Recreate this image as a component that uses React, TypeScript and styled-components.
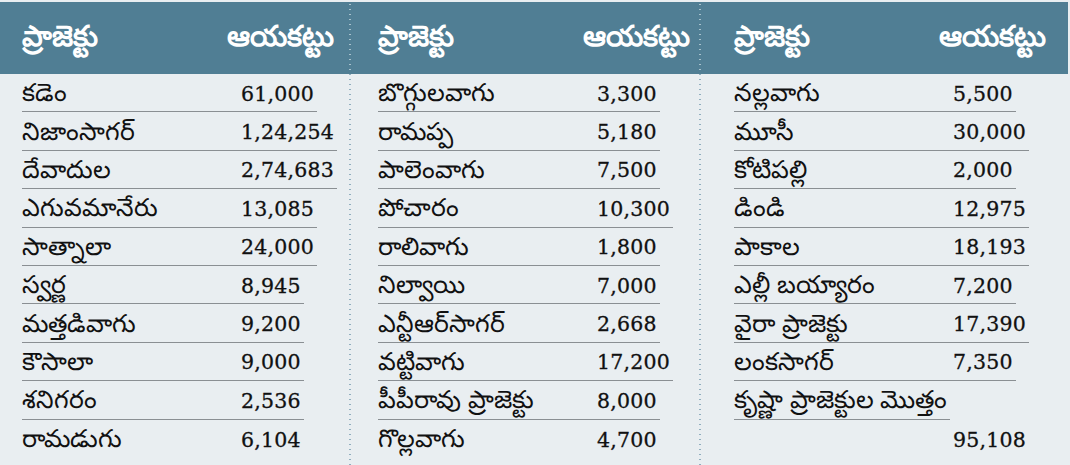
import React from "react";
import styled, { createGlobalStyle } from "styled-components";

const GlobalStyle = createGlobalStyle`
  html, body {
    margin: 0;
    padding: 0;
    background: #eef2f4;
  }
`;

const Page = styled("div")`
  width: 1070px;
  height: 465px;
  padding: 2px 2px 0 0;
  box-sizing: border-box;
  display: flex;
  background: #e9eef1;
  overflow: hidden;
`;

const Panel = styled("div")<{ $width: number }>`
  width: ${(p) => p.$width}px;
  display: flex;
  flex-direction: column;
  flex-shrink: 0;
`;

const Divider = styled("div")`
  width: 2px;
  flex-shrink: 0;
  background-color: #e9eef1;
  background-image: radial-gradient(circle, #8fadbe 0.9px, transparent 1.1px);
  background-size: 2px 5px;
  background-repeat: repeat-y;
  position: relative;
  &::before {
    content: "";
    position: absolute;
    top: 0;
    left: 0;
    width: 2px;
    height: 72px;
    background-color: #507e94;
    background-image: radial-gradient(circle, #a9c3cf 0.9px, transparent 1.1px);
    background-size: 2px 5px;
  }
`;

const Header = styled("div")<{ $inset: number }>`
  height: 72px;
  background: #507e94;
  display: flex;
  align-items: center;
  padding-left: ${(p) => p.$inset}px;
  padding-bottom: 2px;
  box-sizing: border-box;
  color: #ffffff;
  font-family: "Noto Sans", "DejaVu Sans", sans-serif;
  font-weight: 700;
  font-size: 29px;
`;

const HeadName = styled("span")`
  width: 205px;
  flex-shrink: 0;
`;

const Body = styled("div")<{ $inset: number }>`
  display: flex;
  flex-direction: column;
  align-items: flex-start;
  padding-left: ${(p) => p.$inset}px;
`;

const Row = styled("div")<{ $last?: boolean }>`
  height: 38.4px;
  box-sizing: border-box;
  display: flex;
  align-items: center;
  padding: 2px 3px 0 0;
  border-bottom: ${(p) => (p.$last ? "none" : "1.5px solid #8a8f93")};
  color: #111111;
`;

const Name = styled("span")<{ $free?: boolean }>`
  width: ${(p) => (p.$free ? "auto" : "219px")};
  flex-shrink: 0;
  font-family: "Noto Sans", "DejaVu Sans", sans-serif;
  font-size: 25px;
  white-space: nowrap;
`;

const Num = styled("span")`
  font-family: "DejaVu Serif", "Liberation Serif", serif;
  font-size: 20.5px;
  letter-spacing: 0.2px;
  -webkit-text-stroke: 0.3px #111111;
`;

type Item = [string, string];

const columns: { width: number; inset: number; items: Item[] }[] = [
  {
    width: 349,
    inset: 22,
    items: [
      ["కడెం", "61,000"],
      ["నిజాంసాగర్", "1,24,254"],
      ["దేవాదుల", "2,74,683"],
      ["ఎగువమానేరు", "13,085"],
      ["సాత్నాలా", "24,000"],
      ["స్వర్ణ", "8,945"],
      ["మత్తడివాగు", "9,200"],
      ["కౌసాలా", "9,000"],
      ["శనిగరం", "2,536"],
      ["రామడుగు", "6,104"],
    ],
  },
  {
    width: 348,
    inset: 27,
    items: [
      ["బొగ్గులవాగు", "3,300"],
      ["రామప్ప", "5,180"],
      ["పాలెంవాగు", "7,500"],
      ["పోచారం", "10,300"],
      ["రాలివాగు", "1,800"],
      ["నిల్వాయి", "7,000"],
      ["ఎన్టీఆర్‌సాగర్", "2,668"],
      ["వట్టివాగు", "17,200"],
      ["పీపీరావు ప్రాజెక్టు", "8,000"],
      ["గొల్లవాగు", "4,700"],
    ],
  },
  {
    width: 367,
    inset: 33,
    items: [
      ["నల్లవాగు", "5,500"],
      ["మూసీ", "30,000"],
      ["కోటిపల్లి", "2,000"],
      ["డిండి", "12,975"],
      ["పాకాల", "18,193"],
      ["ఎల్లీ బయ్యారం", "7,200"],
      ["వైరా ప్రాజెక్టు", "17,390"],
      ["లంకసాగర్", "7,350"],
      ["కృష్ణా ప్రాజెక్టుల మొత్తం", ""],
      ["", "95,108"],
    ],
  },
];

export default function App() {
  return (
    <>
      <GlobalStyle />
      <Page>
        {columns.map((col, ci) => (
          <React.Fragment key={ci}>
            {ci > 0 && <Divider />}
            <Panel $width={col.width}>
              <Header $inset={col.inset}>
                <HeadName>ప్రాజెక్టు</HeadName>
                <span>ఆయకట్టు</span>
              </Header>
              <Body $inset={col.inset}>
                {col.items.map(([name, num], i) => (
                  <Row key={i} $last={i === col.items.length - 1}>
                    <Name $free={num === ""}>{name}</Name>
                    {num && <Num>{num}</Num>}
                  </Row>
                ))}
              </Body>
            </Panel>
          </React.Fragment>
        ))}
      </Page>
    </>
  );
}
